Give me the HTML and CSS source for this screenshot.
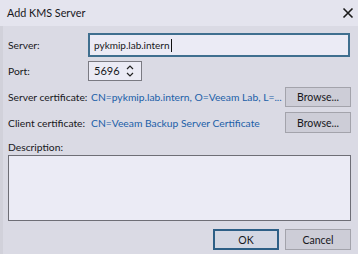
FILE: index.html
```html
<!DOCTYPE html>
<html lang="en">
<head>
  <meta charset="UTF-8" />
  <title>Add KMS Server</title>
  <link rel="stylesheet" href="styles.css">
</head>
<body>
  <div class="dialog">
    <div class="titlebar">
      <span class="title">Add KMS Server</span>
      <svg class="close" width="12" height="12" viewBox="0 0 12 12">
        <path d="M1.5 1.5 L10.5 10.5 M10.5 1.5 L1.5 10.5" stroke="#1a1a1a" stroke-width="1.6" fill="none" />
      </svg>
    </div>

    <div class="content">
      <div class="row row-server">
        <label class="label">Server:</label>
        <div class="field field-focus">pykmip.lab.intern<span class="caret"></span></div>
      </div>

      <div class="row row-port">
        <label class="label">Port:</label>
        <div class="field field-port">
          <span>5696</span>
          <svg class="spin" width="10" height="16" viewBox="0 0 10 16">
            <path d="M2 6 L5 3 L8 6 M2 10 L5 13 L8 10" stroke="#222" stroke-width="1.2" fill="none" />
          </svg>
        </div>
      </div>

      <div class="row row-cert">
        <label class="label">Server certificate:</label>
        <span class="link">CN=pykmip.lab.intern, O=Veeam Lab, L=...</span>
        <button class="btn">Browse...</button>
      </div>

      <div class="row row-cert row-cert2">
        <label class="label">Client certificate:</label>
        <span class="link">CN=Veeam Backup Server Certificate</span>
        <button class="btn">Browse...</button>
      </div>

      <div class="desc-label">Description:</div>
      <div class="desc-box"></div>

      <div class="footer">
        <button class="btn btn-default">OK</button>
        <button class="btn">Cancel</button>
      </div>
    </div>
  </div>
</body>
</html>
```

FILE: styles.css
```css
body {
  margin: 0;
  font-family: Lato, "Noto Sans", sans-serif;
  font-size: 10.3px;
  line-height: 14px;
  color: #17171b;
  background: #dadae4;
}

.dialog {
  width: 358px;
  height: 254px;
  background: #dadae4;
  overflow: hidden;
}

.titlebar {
  height: 26px;
  background: #e4e4ee;
  display: flex;
  align-items: center;
  justify-content: space-between;
  padding: 0 4px 0 7px;
}

.title {
  font-size: 10.8px;
}

.content {
  padding: 7px 7px 0 5px;
  border-left: 3px solid #d1d1da;
  height: 228px;
}

.row {
  display: flex;
  align-items: center;
}

.label {
  width: 80px;
  flex: none;
  white-space: nowrap;
}

.field {
  box-sizing: border-box;
  background: #ebebf5;
  border: 1px solid #7a7a82;
  display: flex;
  align-items: center;
  padding-left: 5px;
}

.field-focus {
  width: 262px;
  height: 24px;
  border: 2px solid #3f6f8f;
  padding-left: 4px;
  font-size: 10px;
}

.caret {
  display: inline-block;
  width: 1px;
  height: 13px;
  background: #111;
  margin-left: 1px;
}

.row-port {
  margin-top: 4px;
}

.field-port {
  width: 54px;
  height: 20px;
  justify-content: space-between;
  padding-right: 6px;
  font-size: 11px;
}

.spin {
  display: block;
}

.row-cert {
  margin-top: 6px;
}

.row-cert2 {
  margin-top: 5px;
}

.row-cert2 .btn {
  height: 21px;
}

.link {
  flex: 1;
  color: #2160a8;
  padding-left: 3px;
  white-space: nowrap;
  overflow: hidden;
}

.btn {
  font-family: inherit;
  font-size: 10.5px;
  color: #17171b;
  width: 66px;
  height: 20px;
  padding: 0;
  background: #cdcdd7;
  border: 1px solid #a3a3ab;
  flex: none;
}

.desc-label {
  margin-top: 7px;
}

.desc-box {
  margin-top: 1px;
  height: 66px;
  background: #ebebf5;
  border: 1px solid #6e6e76;
  box-sizing: border-box;
}

.footer {
  display: flex;
  justify-content: flex-end;
  gap: 6px;
  margin-top: 8px;
}

.footer .btn {
  height: 21px;
}

.btn-default {
  border: 2px solid #2d5f86;
  background: #d3d7e3;
}
```
